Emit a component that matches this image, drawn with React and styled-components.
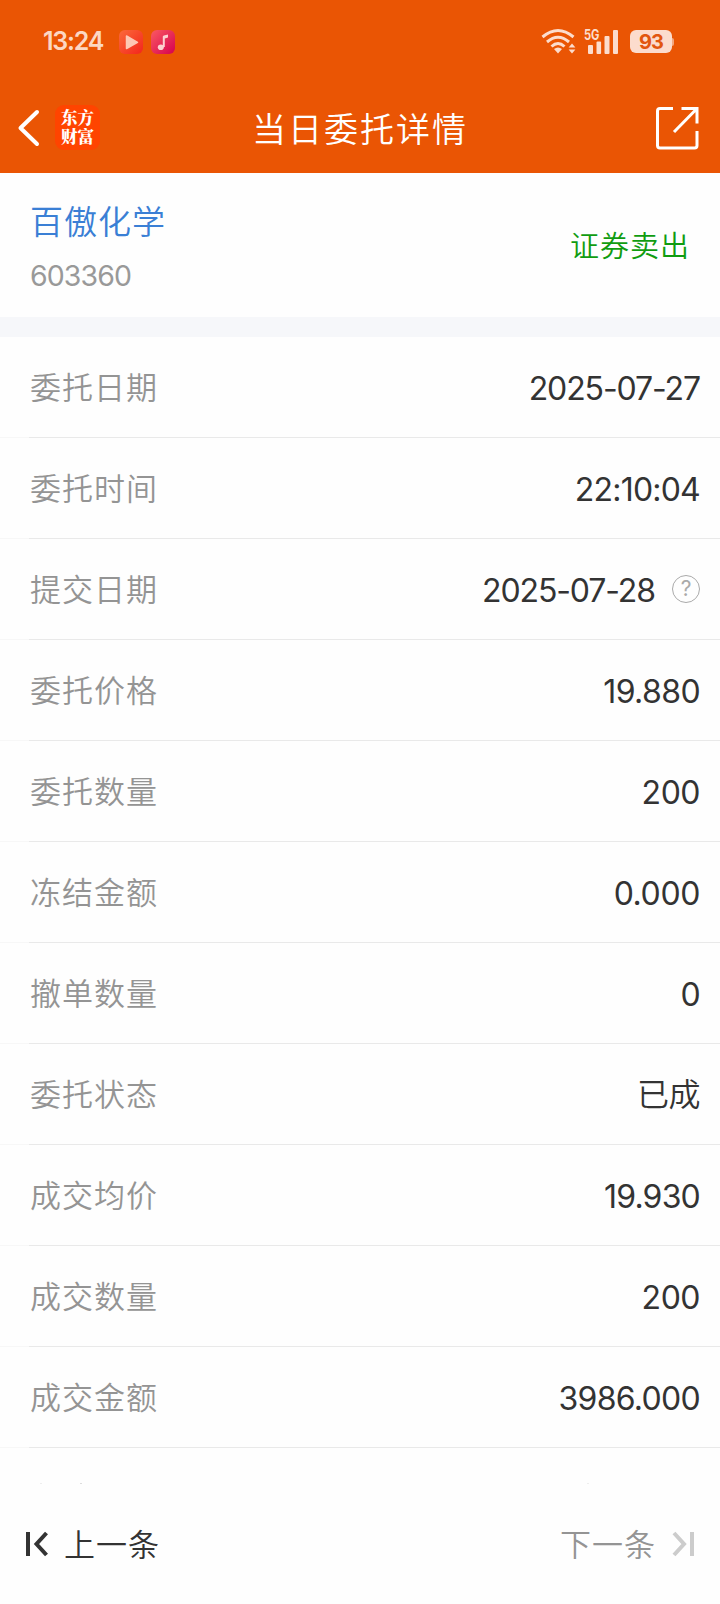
import React from "react";
import styled, { createGlobalStyle } from "styled-components";

const GlobalStyle = createGlobalStyle`
  * { box-sizing: border-box; }
  body {
    margin: 0;
    background: #fefefe;
    font-family: Inter, "Noto Sans CJK SC", sans-serif;
    -webkit-font-smoothing: antialiased;
  }
`;

const Screen = styled.main`
  width: 720px;
  height: 1604px;
  display: flex;
  flex-direction: column;
  overflow: hidden;
`;

const Header = styled.header`
  height: 173px;
  flex: none;
  background: #ea5504;
  color: #fff;
`;

const StatusBar = styled.div`
  height: 84px;
  padding: 0 46px 0 43px;
  display: flex;
  align-items: center;
`;

const Clock = styled.span`
  width: 76px;
  margin-top: -2px;
  font-size: 25px;
  line-height: 30px;
  font-weight: 600;
  letter-spacing: -1.2px;
  color: #fcd7c3;
`;

const AppIcons = styled.div`
  display: flex;
  gap: 8px;
`;

const Signals = styled.div`
  margin: -2px 0 0 auto;
  display: flex;
  align-items: center;
`;

const Battery = styled.div`
  width: 42px;
  height: 23px;
  margin: 1px 0 0 10px;
  border-radius: 6px;
  background: #fcdccd;
  color: #e2560f;
  font-size: 20px;
  line-height: 24px;
  font-weight: 700;
  letter-spacing: -1px;
  text-align: center;
`;

const BatteryTip = styled.div`
  width: 2px;
  height: 8px;
  margin-top: 2px;
  border-radius: 0 2px 2px 0;
  background: #f3a77f;
`;

const NavBar = styled.nav`
  height: 89px;
  padding: 0 21px 2px 16px;
  display: grid;
  grid-template-columns: 120px 1fr 120px;
  align-items: center;
`;

const NavStart = styled.div`
  display: flex;
  align-items: center;
  gap: 15px;
`;

const NavEnd = styled.div`
  display: flex;
  justify-content: flex-end;
  padding-top: 1px;
`;

const Brand = styled.div`
  width: 45px;
  height: 45px;
  border-radius: 9px;
  background: #ff4400;
  font-family: "Noto Serif CJK SC", "Noto Sans CJK SC", serif;
  font-size: 16.5px;
  font-weight: 900;
  display: flex;
  flex-direction: column;
  align-items: center;
  padding-top: 3px;
`;

const BrandLine = styled.span`
  line-height: 19px;
`;

const Title = styled.h1`
  margin: 5px 0 0 5px;
  font-size: 34px;
  line-height: 44px;
  font-weight: 350;
  letter-spacing: 2px;
  text-align: center;
  white-space: nowrap;
`;

const Summary = styled.section`
  height: 144px;
  flex: none;
  padding: 28px 30px 0 30px;
  display: flex;
  justify-content: space-between;
`;

const StockName = styled.div`
  font-size: 33px;
  line-height: 42px;
  font-weight: 350;
  letter-spacing: 1px;
  color: #3a7fd5;
`;

const StockCode = styled.div`
  margin-top: 16px;
  font-size: 28.5px;
  line-height: 34px;
  font-weight: 380;
  letter-spacing: -0.9px;
  color: #999;
`;

const Side = styled.div`
  margin-top: 26px;
  font-size: 29px;
  line-height: 40px;
  font-weight: 350;
  letter-spacing: 1px;
  color: #109c10;
`;

const Divider = styled.div`
  height: 20px;
  flex: none;
  background: #f6f7fa;
`;

const Row = styled.div`
  height: 101px;
  flex: none;
  display: flex;
  align-items: center;
  padding: 3px 20px 0 30px;
  border-bottom: 1px solid;
  border-image: linear-gradient(to right, #f7f7f7 30px, #e9e9e9 30px) 1;
`;

const Label = styled.span`
  margin-top: -1px;
  font-size: 31px;
  line-height: 44px;
  font-weight: 350;
  letter-spacing: 1px;
  color: #949494;
`;

const Value = styled.span`
  margin-left: auto;
  margin-top: ${(p) => (p.$cjk ? -1 : 0)}px;
  font-size: 32px;
  line-height: 44px;
  font-weight: ${(p) => (p.$cjk ? 350 : 380)};
  letter-spacing: ${(p) => p.$tracking ?? -0.7}px;
  color: #333;
`;

const Hint = styled.span`
  width: 28px;
  height: 28px;
  margin: -3px 0 0 17px;
  border: 1.5px solid #aaa;
  border-radius: 50%;
  color: #aaa;
  font-size: 21px;
  line-height: 25px;
  text-align: center;
`;

const Peek = styled.div`
  height: 36px;
  flex: none;
  display: flex;
  align-items: flex-end;
  padding: 0 131px 0 40px;
`;

const Fleck = styled.i`
  width: 2px;
  height: 1px;
  background: ${(p) => p.$tone};
  margin-left: ${(p) => p.$before};
`;

const Footer = styled.footer`
  height: 120px;
  flex: none;
  padding: 0 25px 0 24px;
  display: flex;
  align-items: center;
  justify-content: space-between;
`;

const Pager = styled.button`
  display: flex;
  align-items: center;
  gap: ${(p) => (p.$disabled ? 15 : 16)}px;
  padding: 0;
  border: 0;
  background: none;
  font: inherit;
  font-size: 31px;
  line-height: 44px;
  font-weight: 350;
  letter-spacing: 1px;
  color: ${(p) => (p.$disabled ? "#949494" : "#333")};
`;

const PagerText = styled.span`
  margin-top: 1px;
`;

const rows = [
  { label: "委托日期", value: "2025-07-27", tracking: -1.1 },
  { label: "委托时间", value: "22:10:04", tracking: -0.8 },
  { label: "提交日期", value: "2025-07-28", hint: true, tracking: -1.1 },
  { label: "委托价格", value: "19.880", tracking: -0.6 },
  { label: "委托数量", value: "200", tracking: -0.5 },
  { label: "冻结金额", value: "0.000", tracking: -0.4 },
  { label: "撤单数量", value: "0" },
  { label: "委托状态", value: "已成", cjk: true, tracking: -0.5 },
  { label: "成交均价", value: "19.930", tracking: -0.8 },
  { label: "成交数量", value: "200", tracking: -0.5 },
  { label: "成交金额", value: "3986.000" },
];

function VideoIcon() {
  return (
    <svg width="24" height="24" viewBox="0 0 24 24">
      <defs>
        <linearGradient id="video" x1="0" y1="0" x2="1" y2="1">
          <stop offset="0" stopColor="#fb6a3a" />
          <stop offset="1" stopColor="#f3251c" />
        </linearGradient>
      </defs>
      <rect width="24" height="24" rx="6" fill="url(#video)" />
      <path d="M7.5 6v12.5L18.5 12.3Z" fill="#fdc8b4" stroke="#fdc8b4" strokeWidth="1.5" strokeLinejoin="round" />
    </svg>
  );
}

function MusicIcon() {
  return (
    <svg width="24" height="24" viewBox="0 0 24 24">
      <defs>
        <linearGradient id="music" x1="0" y1="0" x2="1" y2="1">
          <stop offset="0" stopColor="#fa5a62" />
          <stop offset="1" stopColor="#d6004f" />
        </linearGradient>
      </defs>
      <rect width="24" height="24" rx="6" fill="url(#music)" />
      <ellipse cx="9.8" cy="17.2" rx="3" ry="2.8" fill="#fdd0d0" />
      <path d="M11.8 17V6.6q0-1 1-1.2l4.2-1v3.2l-3.2 1V17Z" fill="#fdd0d0" />
    </svg>
  );
}

const SignalSvg = styled.svg`
  overflow: visible;
  margin-right: ${(p) => p.$after || 0}px;
`;

function WifiIcon() {
  return (
    <SignalSvg $after={7} width="36" height="26" viewBox="0 0 36 26" fill="none" stroke="#fcdccd" strokeWidth="3">
      <path d="M1.5 9Q17 -4 32.5 9" />
      <path d="M6 14Q17 4.5 28 14" />
      <path d="M10.5 18.5Q17 12.5 23.5 18.5" />
      <path d="M13 21Q17 18 21 21L17 25.5Z" fill="#fcdccd" stroke="none" />
      <path d="M31 15.5l3.4 4h-6.8ZM31 25.5l3.4-4h-6.8Z" fill="#fcdccd" stroke="none" />
    </SignalSvg>
  );
}

function CellIcon() {
  return (
    <SignalSvg width="36" height="26" viewBox="0 0 36 26" fill="#fcdccd">
      <text x="0" y="11.5" fontSize="14" fontWeight="700" textLength="15.5" lengthAdjust="spacingAndGlyphs">5G</text>
      <rect x="4" y="17" width="5" height="9" rx="1" />
      <rect x="12.5" y="13.5" width="4.6" height="12.5" rx="1" />
      <rect x="20.5" y="8" width="5" height="18" rx="1" />
      <rect x="29" y="2" width="5" height="24" rx="1" />
    </SignalSvg>
  );
}

function BackIcon() {
  return (
    <svg width="24" height="38" viewBox="0 0 24 38" fill="none" stroke="#fff" strokeWidth="4" strokeLinecap="round" strokeLinejoin="round">
      <path d="M21 3L4.5 19L21 35" />
    </svg>
  );
}

function ShareIcon() {
  return (
    <svg width="43" height="43" viewBox="0 0 43 43" fill="none" stroke="#fff" strokeWidth="3">
      <path d="M17 1.5H4Q1.5 1.5 1.5 4V38.5Q1.5 41 4 41H38.5Q41 41 41 38.5V24" />
      <path d="M25.500 1.5H41V16.500M41 1.5L18 25" />
    </svg>
  );
}

function FirstIcon() {
  return (
    <svg width="24" height="26" viewBox="0 0 24 26" fill="none" stroke="#333" strokeWidth="4">
      <path d="M4 1V25M22.5 2L12.5 13L22.5 24" />
    </svg>
  );
}

function LastIcon() {
  return (
    <svg width="24" height="26" viewBox="0 0 24 26" fill="none" stroke="#ccc" strokeWidth="4">
      <path d="M21 1V25M3 2L13 13L3 24" />
    </svg>
  );
}

export default function App() {
  return (
    <Screen>
      <GlobalStyle />
      <Header>
        <StatusBar>
          <Clock>13:24</Clock>
          <AppIcons>
            <VideoIcon />
            <MusicIcon />
          </AppIcons>
          <Signals>
            <WifiIcon />
            <CellIcon />
            <Battery>93</Battery>
            <BatteryTip />
          </Signals>
        </StatusBar>
        <NavBar>
          <NavStart>
            <BackIcon />
            <Brand>
              <BrandLine>东方</BrandLine>
              <BrandLine>财富</BrandLine>
            </Brand>
          </NavStart>
          <Title>当日委托详情</Title>
          <NavEnd>
            <ShareIcon />
          </NavEnd>
        </NavBar>
      </Header>
      <Summary>
        <div>
          <StockName>百傲化学</StockName>
          <StockCode>603360</StockCode>
        </div>
        <Side>证券卖出</Side>
      </Summary>
      <Divider />
      {rows.map((row) => (
        <Row key={row.label}>
          <Label>{row.label}</Label>
          <Value $cjk={row.cjk} $tracking={row.tracking}>{row.value}</Value>
          {row.hint && <Hint>?</Hint>}
        </Row>
      ))}
      <Peek>
        <Fleck $tone="#eee" $before="0" />
        <Fleck $tone="#ddd" $before="38px" />
        <Fleck $tone="#eee" $before="auto" />
      </Peek>
      <Footer>
        <Pager>
          <FirstIcon />
          <PagerText>上一条</PagerText>
        </Pager>
        <Pager $disabled>
          <PagerText>下一条</PagerText>
          <LastIcon />
        </Pager>
      </Footer>
    </Screen>
  );
}
